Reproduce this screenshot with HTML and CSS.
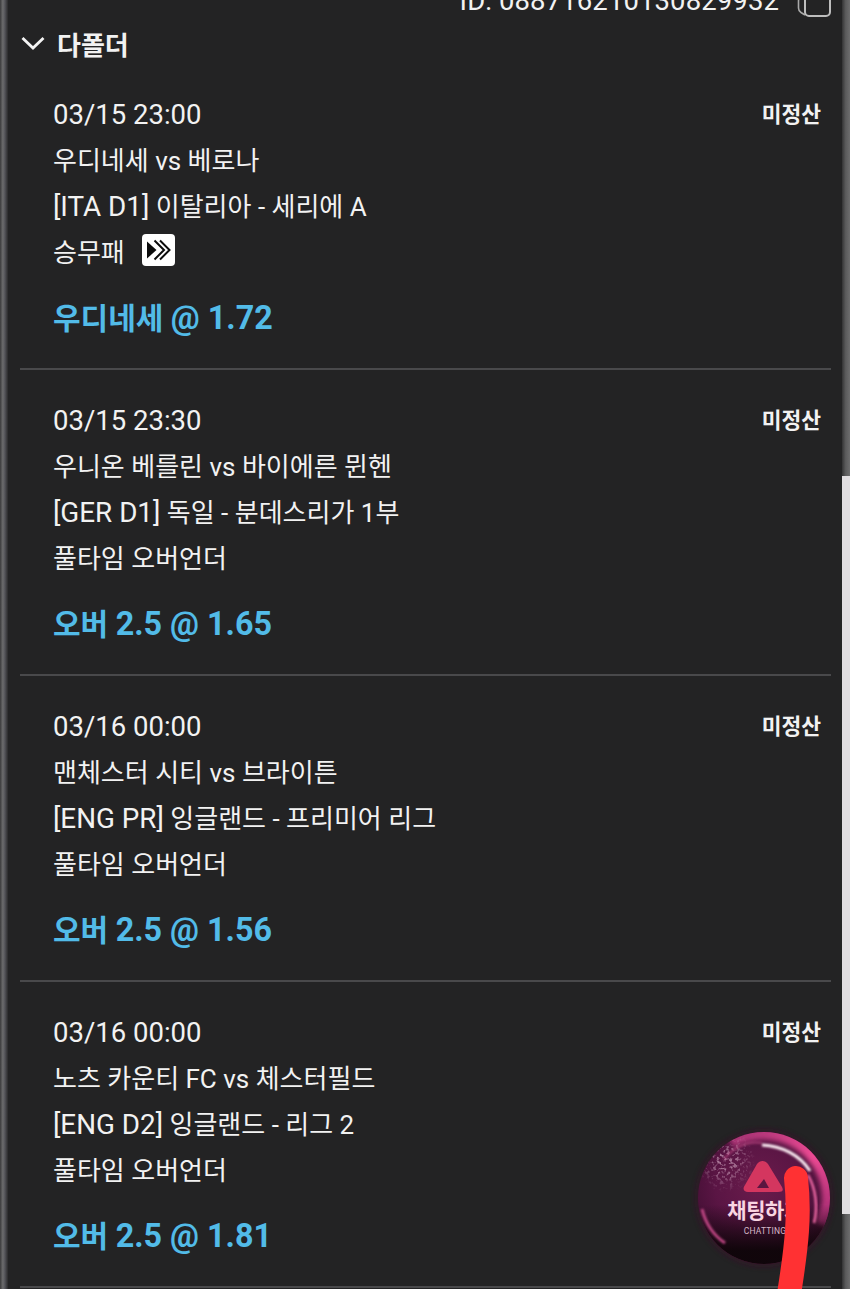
FILE: index.html
```html
<!DOCTYPE html>
<html lang="ko">
<head>
<meta charset="utf-8">
<title>다폴더</title>
<link rel="stylesheet" href="styles.css">
</head>
<body>
<div class="screen">
  <div class="gutter-left"></div>
  <main class="panel">
    <div class="id-row">
      <span class="id-text">ID: 088716210130829932</span>
      <svg class="copy-icon" width="36" height="18" viewBox="0 0 36 18" fill="none">
        <path d="M8 -2 H4 Q1.5 -2 1.5 1 V8 Q1.5 11 4 12.5 L8 15" stroke="#a9a9a9" stroke-width="1.6"/>
        <rect x="8" y="-12" width="25" height="28" rx="4" stroke="#bdbdbd" stroke-width="2"/>
      </svg>
    </div>
    <div class="folder-head">
      <svg class="chevron" width="24" height="14" viewBox="0 0 24 14" fill="none">
        <path d="M1.5 2 L12 12 L22.5 2" stroke="#f4f4f4" stroke-width="2.8"/>
      </svg>
      <span class="folder-title">다폴더</span>
    </div>

    <section class="bet">
      <div class="line line-top"><span>03/15 23:00</span><span class="status">미정산</span></div>
      <div class="line"><span>우디네세 vs 베로나</span></div>
      <div class="line"><span><span class="lat">[ITA D1]</span> 이탈리아 - 세리에 A</span></div>
      <div class="line"><span>승무패</span>
        <svg class="stream" width="33" height="32" viewBox="0 0 33 32">
          <rect width="33" height="32" rx="4" fill="#fff"/>
          <path d="M5 7.5 L14.5 16 L5 24.5 Z" fill="#0c0c0c"/>
          <path d="M12.5 6.5 L22 16 L12.5 25.5 M18 6.5 L27.5 16 L18 25.5" fill="none" stroke="#0c0c0c" stroke-width="2"/>
        </svg>
      </div>
      <div class="pick">우디네세 <span class="odds">@ 1.72</span></div>
    </section>

    <section class="bet">
      <div class="line line-top"><span>03/15 23:30</span><span class="status">미정산</span></div>
      <div class="line"><span>우니온 베를린 vs 바이에른 뮌헨</span></div>
      <div class="line"><span><span class="lat">[GER D1]</span> 독일 - 분데스리가 1부</span></div>
      <div class="line"><span>풀타임 오버언더</span></div>
      <div class="pick">오버 <span class="odds">2.5 @ 1.65</span></div>
    </section>

    <section class="bet">
      <div class="line line-top"><span>03/16 00:00</span><span class="status">미정산</span></div>
      <div class="line"><span>맨체스터 시티 vs 브라이튼</span></div>
      <div class="line"><span><span class="lat">[ENG PR]</span> 잉글랜드 - 프리미어 리그</span></div>
      <div class="line"><span>풀타임 오버언더</span></div>
      <div class="pick">오버 <span class="odds">2.5 @ 1.56</span></div>
    </section>

    <section class="bet">
      <div class="line line-top"><span>03/16 00:00</span><span class="status">미정산</span></div>
      <div class="line"><span>노츠 카운티 FC vs 체스터필드</span></div>
      <div class="line"><span><span class="lat">[ENG D2]</span> 잉글랜드 - 리그 2</span></div>
      <div class="line"><span>풀타임 오버언더</span></div>
      <div class="pick">오버 <span class="odds">2.5 @ 1.81</span></div>
    </section>
  </main>
  <div class="gutter-right">
    <div class="gutter-top"></div>
    <div class="gutter-light"></div>
    <div class="gutter-bottom"></div>
  </div>
</div>

<div class="chat">
  <svg class="chat-art" width="150" height="150" viewBox="0 0 150 150">
    <defs>
      <radialGradient id="ball" cx="46%" cy="40%" r="60%">
        <stop offset="0" stop-color="#6a1c4c"/>
        <stop offset="0.55" stop-color="#5a1544"/>
        <stop offset="0.8" stop-color="#4a1139"/>
        <stop offset="1" stop-color="#3b1029"/>
      </radialGradient>
      <linearGradient id="shade" x1="0" y1="0" x2="0" y2="1">
        <stop offset="0.55" stop-color="#0e0509" stop-opacity="0"/>
        <stop offset="0.9" stop-color="#0e0509" stop-opacity="0.96"/>
      </linearGradient>
      <linearGradient id="rim" x1="0" y1="0" x2="1" y2="1">
        <stop offset="0" stop-color="#a03070"/>
        <stop offset="0.55" stop-color="#ee4a94"/>
        <stop offset="1" stop-color="#a02a70"/>
      </linearGradient>
      <radialGradient id="speckFade" cx="0.5" cy="0.5" r="0.5">
        <stop offset="0.25" stop-color="#fff"/>
        <stop offset="1" stop-color="#000"/>
      </radialGradient>
      <mask id="speckMask"><ellipse cx="36" cy="36" rx="30" ry="32" fill="url(#speckFade)"/></mask>
      <clipPath id="ballClip"><circle cx="74" cy="73" r="66"/></clipPath>
      <filter id="soft" x="-20%" y="-20%" width="140%" height="140%"><feGaussianBlur stdDeviation="2.6"/></filter>
      <filter id="blur1" x="-20%" y="-20%" width="140%" height="140%"><feGaussianBlur stdDeviation="0.9"/></filter>
      <filter id="noise">
        <feTurbulence type="fractalNoise" baseFrequency="0.3" numOctaves="2" seed="7"/>
        <feColorMatrix values="0 0 0 0 0.80  0 0 0 0 0.55  0 0 0 0 0.70  0 0 0 5 -2.5"/>
        <feGaussianBlur stdDeviation="0.7"/>
      </filter>
    </defs>
    <circle cx="74" cy="73" r="69" fill="#3d1029" opacity="0.5" filter="url(#soft)"/>
    <circle cx="74" cy="73" r="66" fill="url(#ball)"/>
    <g clip-path="url(#ballClip)">
      <path d="M40 16 A66 66 0 0 1 139 80 L133 100" fill="none" stroke="url(#rim)" stroke-width="15" filter="url(#soft)"/>
      <rect x="0" y="0" width="80" height="90" filter="url(#noise)" mask="url(#speckMask)" opacity="0.55"/>
      <circle cx="74" cy="73" r="66" fill="url(#shade)"/>
      <path d="M12 84 C16 100 23 110 35 118" fill="none" stroke="#c04684" stroke-width="3" filter="url(#blur1)"/>
    </g>
    <path d="M34 34 C46 20 60 16 72 18" fill="none" stroke="#b8447f" stroke-width="2" opacity="0.7" filter="url(#blur1)"/>
    <path d="M118 50 C126 64 128 82 124 98" fill="none" stroke="#f46aa8" stroke-width="2.4" filter="url(#blur1)"/>
    <path d="M72 20 C92 21 110 30 120 46" fill="none" stroke="#fff0f6" stroke-width="3" filter="url(#blur1)"/>
    <path d="M67 39 C70 35 75 35 78 39 L92 62 C94 66 92 67 88 67 L58 67 C54 67 52 64 55 60 Z" fill="#d4365f"/>
    <path d="M74 54 L79 63 L67 63 Z" fill="#5a1640"/>
  </svg>
  <span class="chat-title">채팅하기</span>
  <span class="chat-sub">CHATTING</span>
</div>

<svg class="scribble" width="60" height="125" viewBox="0 0 60 125" fill="none">
  <path d="M26 14 C30 50 27 80 19 130" stroke="#ff3133" stroke-width="24" stroke-linecap="round"/>
</svg>
</body>
</html>
```
FILE: styles.css
```css
* { box-sizing: border-box; }
html, body { margin: 0; padding: 0; height: 100%; }
body {
  position: relative;
  width: 850px;
  height: 1289px;
  overflow: hidden;
  background: #232324;
  color: #f2f2f2;
  font-family: Roboto, "Noto Sans CJK KR", sans-serif;
  font-size: 27px;
}
.screen { display: flex; height: 1289px; overflow: hidden; }
.gutter-left {
  flex: 0 0 8px;
  background: linear-gradient(90deg, #3a3a3b 0, #6c6c6d 35%, #55555a 60%, #2a2a2b 100%);
}
.panel { flex: 1 1 auto; padding: 0 11px 0 12px; min-width: 0; }
.gutter-right { flex: 0 0 8px; display: flex; flex-direction: column; }
.gutter-top {
  flex: 0 0 476px;
  background: linear-gradient(90deg, #333334 0, #5a5a5b 45%, #6d6d6e 100%);
}
.gutter-light { flex: 0 0 738px; background: #e0dde0; }
.gutter-bottom {
  flex: 1 1 auto;
  background: linear-gradient(90deg, #333334 0, #5a5a5b 45%, #6d6d6e 100%);
}

.id-row {
  display: flex;
  justify-content: flex-end;
  align-items: flex-end;
  gap: 18px;
  height: 18px;
  overflow: hidden;
}
.id-text { font-size: 27.5px; line-height: 26px; margin-bottom: 4px; letter-spacing: 0.1px; white-space: nowrap; }
.copy-icon { flex: none; margin-right: -2px; }

.folder-head {
  display: flex;
  align-items: center;
  gap: 12px;
  height: 46px;
  padding-top: 4px;
}
.chevron { flex: none; margin-left: 1px; }
.folder-title { font-weight: 700; font-size: 26px; }

.bet {
  padding: 28px 0 27px 33px;
  border-bottom: 2px solid #49494b;
}
.line { display: flex; align-items: center; height: 46px; line-height: 46px; white-space: nowrap; font-size: 26px; }
.line-top { justify-content: space-between; padding-right: 10px; font-size: 27.5px; }
.lat { font-size: 27.8px; }
.status { font-weight: 700; font-size: 21.5px; }
.stream { flex: none; margin: -6px 0 0 17px; }
.pick {
  height: 46px;
  line-height: 46px;
  margin-top: 19px;
  font-size: 30px;
  font-weight: 700;
  color: #52bbe8;
  white-space: nowrap;
}
.odds { font-size: 32.3px; }

.chat {
  position: absolute;
  left: 690px;
  top: 1125px;
  width: 150px;
  height: 150px;
  display: flex;
  flex-direction: column;
  align-items: center;
  padding-top: 72px;
}
.chat-art { position: absolute; left: 0; top: 0; }
.chat-title {
  position: relative;
  font-size: 21px;
  line-height: 28px;
  font-weight: 700;
  color: #f9d5e2;
  letter-spacing: -0.5px;
}
.chat-sub {
  position: relative;
  font-size: 8.5px;
  line-height: 12px;
  letter-spacing: 0.2px;
  color: #d6b9c8;
}
.scribble { position: absolute; left: 770px; top: 1164px; }
```
